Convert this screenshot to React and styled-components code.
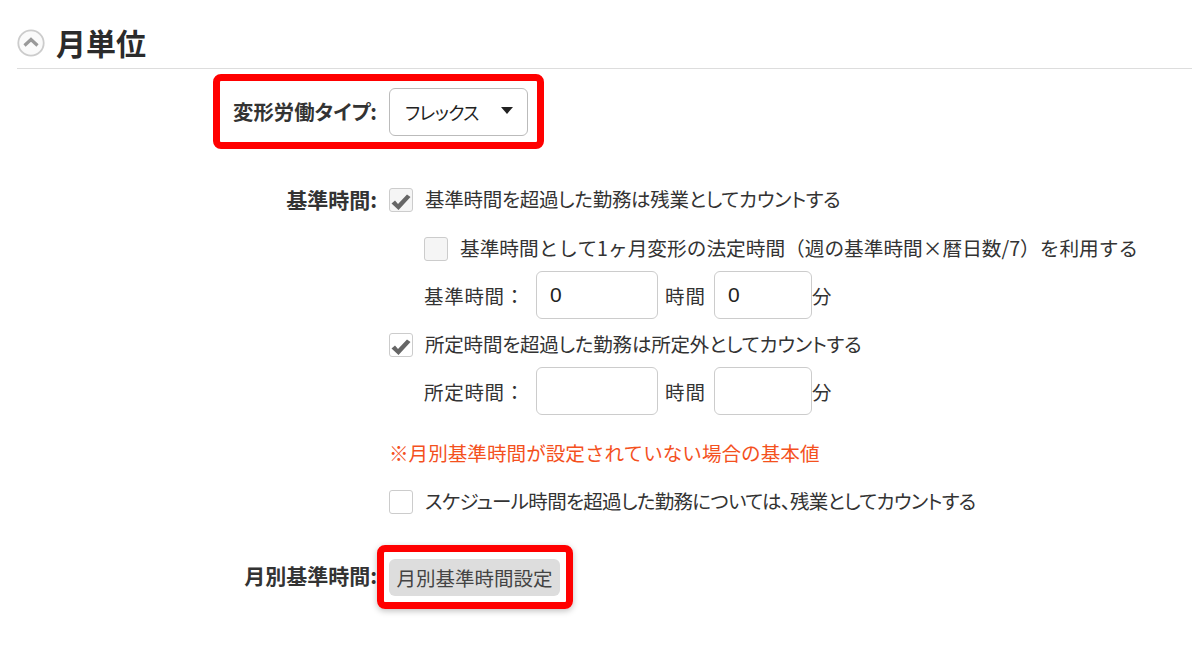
import React from "react";
import styled, { createGlobalStyle } from "styled-components";

const Global = createGlobalStyle`
  html, body { margin: 0; padding: 0; background: #fff; }
  body { font-family: "Noto Sans CJK JP", "Noto Sans", sans-serif; color: #333; font-size: 19.5px; }
`;
const Page = styled.div`
  width: 1192px; height: 653px; overflow: hidden; padding-left: 17px; box-sizing: border-box;
`;
const Header = styled.header`
  border-bottom: 1px solid #ddd; display: flex; align-items: center; gap: 11px;
  padding: 19px 0 1px 0; height: 48px;
`;
const Title = styled.h2`
  margin: -2px 0 0; font-size: 30px; font-weight: 700; line-height: 48px; color: #2b2b2b;
`;
const Form = styled.div`
  display: flex; flex-direction: column; width: 1175px;
`;
const TypeBox = styled.div`
  margin: 5px 0 0 196px; width: 331px; height: 75px; box-sizing: border-box;
  border: 7px solid #f00; border-radius: 8px; display: flex; align-items: center; justify-content: flex-end;
  gap: 12px; padding-right: 9px;
`;
const Label = styled.label`
  font-weight: 700; font-size: ${p => p.$size || 21}px; color: #333; white-space: nowrap; line-height: 26px;
  font-feature-settings: "palt"; margin-top: -2px;
`;
const SelectBox = styled.div`
  width: 139px; height: 48px; box-sizing: border-box; border: 1px solid #bbb; border-radius: 6px;
  display: flex; align-items: center; justify-content: space-between; padding: 0 14px 0 15px; color: #222;
  font-size: 18px; letter-spacing: -0.6px; flex: none; font-feature-settings: "palt";
`;
const Arrow = styled.span`
  width: 0; height: 0; border-left: 6px solid transparent; border-right: 6px solid transparent;
  border-top: 7px solid #222; margin-top: -3px;
`;
const Grid = styled.div`
  display: grid; grid-template-columns: 360px 1fr; column-gap: 12px; margin-top: ${p => p.$mt}px;
`;
const LabelCell = styled.div`
  display: flex; justify-content: flex-end; align-items: flex-start; padding-top: ${p => p.$top || 0}px;
`;
const Options = styled.div`
  display: flex; flex-direction: column;
`;
const CheckRow = styled.div`
  display: flex; align-items: center; gap: 12px; height: 24px; white-space: nowrap; color: #333;
  margin: ${p => p.$m || "0"};
`;
const CheckText = styled.span`
  margin-top: -3px; letter-spacing: ${p => p.$ls || 0}px;
  font-feature-settings: ${p => (p.$plain ? "normal" : '"palt"')};
  font-size: ${p => p.$size || 19.5}px;
`;
const Box = styled.span`
  width: 24px; height: 24px; box-sizing: border-box; border: 1px solid #ccc; border-radius: 3px; flex: none;
  background: ${p => (p.$muted ? "#f5f5f5" : "#fff")}; display: flex; align-items: center; justify-content: center;
`;
const InputRow = styled.div`
  display: flex; align-items: center; height: 48px; margin: ${p => p.$m}; white-space: nowrap; color: #333;
`;
const RowLabel = styled.span`
  width: 112px; flex: none; letter-spacing: 0.7px;
`;
const Field = styled.div`
  width: ${p => p.$w}px; height: 48px; box-sizing: border-box; border: 1px solid #ccc; border-radius: 6px;
  padding-left: 13px; display: flex; align-items: center; font-size: 21px; color: #222; flex: none;
  font-family: "Liberation Sans", sans-serif;
`;
const Unit = styled.span`
  width: ${p => p.$w}px; padding-left: ${p => p.$l}px; box-sizing: border-box; flex: none; letter-spacing: 1px;
`;
const Note = styled.div`
  color: #f4511e; margin-top: 26px; height: 24px; line-height: 24px; font-size: 19.6px;
`;
const ButtonBox = styled.div`
  width: 196px; height: 64px; box-sizing: border-box; border: 7px solid #f00; border-radius: 8px;
  margin-left: -12px; padding: 7px 0 0 5px; box-shadow: 0 2px 6px rgba(0,0,0,.25);
`;
const MonthButton = styled.button`
  width: 171px; height: 37px; border: 0; border-radius: 6px; background: #ddd; color: #444; padding: 1px 0 0;
  font: 400 19.5px "Noto Sans CJK JP", sans-serif; display: block; line-height: 36px;
`;
const Check = () => (
  <svg width="22" height="20" viewBox="0 0 22 20" style={{ margin: "4px 0 0 -1px" }}>
    <path d="M1.5 11.5 L5 8.5 L8 12 L17 2.5 L20.5 5 L8.5 18 Z" fill="#666" />
  </svg>
);
const Chevron = () => (
  <svg width="28" height="28" viewBox="0 0 28 28">
    <circle cx="14" cy="14" r="12.7" fill="#fafafa" stroke="#ccc" strokeWidth="1.8" />
    <path d="M7.5 16.5 L14 10.5 L20.5 16.5" fill="none" stroke="#999" strokeWidth="3.2" />
  </svg>
);

export default function App() {
  return (
    <Page>
      <Global />
      <Header>
        <Chevron />
        <Title>月単位</Title>
      </Header>
      <Form>
        <TypeBox>
          <Label $size={20.4}>変形労働タイプ:</Label>
          <SelectBox>フレックス<Arrow /></SelectBox>
        </TypeBox>
        <Grid $mt={39}>
          <LabelCell><Label>基準時間:</Label></LabelCell>
          <Options>
            <CheckRow><Box $muted><Check /></Box><CheckText $ls={-0.27}>基準時間を超過した勤務は残業としてカウントする</CheckText></CheckRow>
            <CheckRow $m="25px 0 0 35px"><Box $muted /><CheckText $plain $size={19.68}>基準時間として1ヶ月変形の法定時間（週の基準時間×暦日数/7）を利用する</CheckText></CheckRow>
            <InputRow $m="10px 0 0 35px">
              <RowLabel>基準時間：</RowLabel>
              <Field $w={122}>0</Field>
              <Unit $w={56} $l={7}>時間</Unit>
              <Field $w={98}>0</Field>
              <Unit $w={30} $l={0}>分</Unit>
            </InputRow>
            <CheckRow $m="14px 0 0 0"><Box><Check /></Box><CheckText $ls={-0.2}>所定時間を超過した勤務は所定外としてカウントする</CheckText></CheckRow>
            <InputRow $m="10px 0 0 35px">
              <RowLabel>所定時間：</RowLabel>
              <Field $w={122} />
              <Unit $w={56} $l={7}>時間</Unit>
              <Field $w={98} />
              <Unit $w={30} $l={0}>分</Unit>
            </InputRow>
            <Note>※月別基準時間が設定されていない場合の基本値</Note>
            <CheckRow $m="25px 0 0 0"><Box /><CheckText $ls={-0.68}>スケジュール時間を超過した勤務については、残業としてカウントする</CheckText></CheckRow>
          </Options>
        </Grid>
        <Grid $mt={31}>
          <LabelCell $top={19}><Label>月別基準時間:</Label></LabelCell>
          <ButtonBox><MonthButton>月別基準時間設定</MonthButton></ButtonBox>
        </Grid>
      </Form>
    </Page>
  );
}
